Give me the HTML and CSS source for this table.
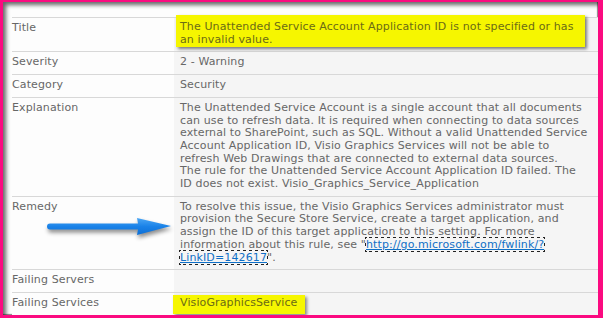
FILE: index.html
```html
<!DOCTYPE html>
<html>
<head>
<meta charset="utf-8">
<link rel="stylesheet" href="styles.css">
</head>
<body>
<div class="frame">
  <table class="props">
    <colgroup><col class="col-label"><col class="col-value"></colgroup>
    <tr class="row-title">
      <td class="label">Title</td>
      <td class="value"><div class="hl-title">The Unattended Service Account Application ID is not specified or has<br>an invalid value.</div></td>
    </tr>
    <tr>
      <td class="label">Severity</td>
      <td class="value">2 - Warning</td>
    </tr>
    <tr>
      <td class="label">Category</td>
      <td class="value">Security</td>
    </tr>
    <tr>
      <td class="label">Explanation</td>
      <td class="value">The Unattended Service Account is a single account that all documents<br>can use to refresh data. It is required when connecting to data sources<br>external to SharePoint, such as SQL. Without a valid Unattended Service<br>Account Application ID, Visio Graphics Services will not be able to<br>refresh Web Drawings that are connected to external data sources.<br>The rule for the Unattended Service Account Application ID failed. The<br>ID does not exist. Visio_Graphics_Service_Application</td>
    </tr>
    <tr>
      <td class="label">Remedy</td>
      <td class="value">To resolve this issue, the Visio Graphics Services administrator must<br>provision the Secure Store Service, create a target application, and<br>assign the ID of this target application to this setting. For more<br>information about this rule, see "<a class="link" href="#">http://go.microsoft.com/fwlink/?<br>LinkID=142617</a>".</td>
    </tr>
    <tr>
      <td class="label">Failing Servers</td>
      <td class="value"></td>
    </tr>
    <tr>
      <td class="label">Failing Services</td>
      <td class="value"><span class="hl-service">VisioGraphicsService</span></td>
    </tr>
  </table>
  <svg class="arrow" width="132" height="30" viewBox="0 0 132 30">
    <defs>
      <linearGradient id="ag" x1="0" y1="0" x2="0" y2="1">
        <stop offset="0" stop-color="#4aa6f5"/>
        <stop offset="0.5" stop-color="#1a82e8"/>
        <stop offset="1" stop-color="#0d6fd6"/>
      </linearGradient>
    </defs>
    <path d="M5 9.5 L93 9.5 L92 4 L126 12 L92 21 L93 15.5 L5 15.5 Q2 15.5 2 12.5 Q2 9.5 5 9.5 Z" fill="url(#ag)"/>
  </svg>
</div>
</body>
</html>
```

FILE: styles.css
```css
html, body {
  margin: 0;
  padding: 0;
  background: #ffffff;
}

.frame {
  position: relative;
  box-sizing: border-box;
  width: 603px;
  height: 318px;
  overflow: hidden;
  border-style: solid;
  border-color: #fb0a80;
  border-width: 2px 5px 3px 3px;
  background: #fdfdfd;
  box-shadow: inset 3px 3px 4px rgba(0, 0, 0, 0.6), inset -1px -1px 1px rgba(0, 0, 0, 0.45);
  padding: 15px 0 0 9px;
  font-family: "DejaVu Sans", Verdana, sans-serif;
  font-size: 11px;
  letter-spacing: 0.12px;
  line-height: 12.7px;
  color: #676767;
}

.props {
  border-collapse: collapse;
  table-layout: fixed;
  width: 586px;
}

.col-label {
  width: 162px;
}

.props td {
  border-top: 1px solid #d8d8d8;
  vertical-align: top;
  padding: 4px 6px 5px 6px;
  white-space: nowrap;
}

.props td.label {
  padding-left: 0;
  background: #fdfdfd;
}

.props td.value {
  background: #f5f5f5;
  overflow: visible;
}

.row-title td {
  padding-bottom: 4px;
}

.hl-title {
  position: relative;
  background: #f6f600;
  color: #6b6b16;
  margin: -7px 7px 0 -4px;
  padding: 6px 4px 1px 4px;
  box-shadow: 2px 2px 3px rgba(0, 0, 0, 0.5);
}

.hl-service {
  position: relative;
  display: inline-block;
  background: #f6f600;
  color: #6b6b16;
  margin: -6px 0 0 -7px;
  padding: 2px 7px 4px 7px;
  box-shadow: 2px 2px 3px rgba(0, 0, 0, 0.45);
}

.link {
  color: #0f6fc6;
  text-decoration: underline;
  outline: 1px dotted #222;
}

.arrow {
  position: absolute;
  left: 42px;
  top: 212px;
  filter: drop-shadow(1px 3px 2px rgba(0, 0, 0, 0.45));
}
```
